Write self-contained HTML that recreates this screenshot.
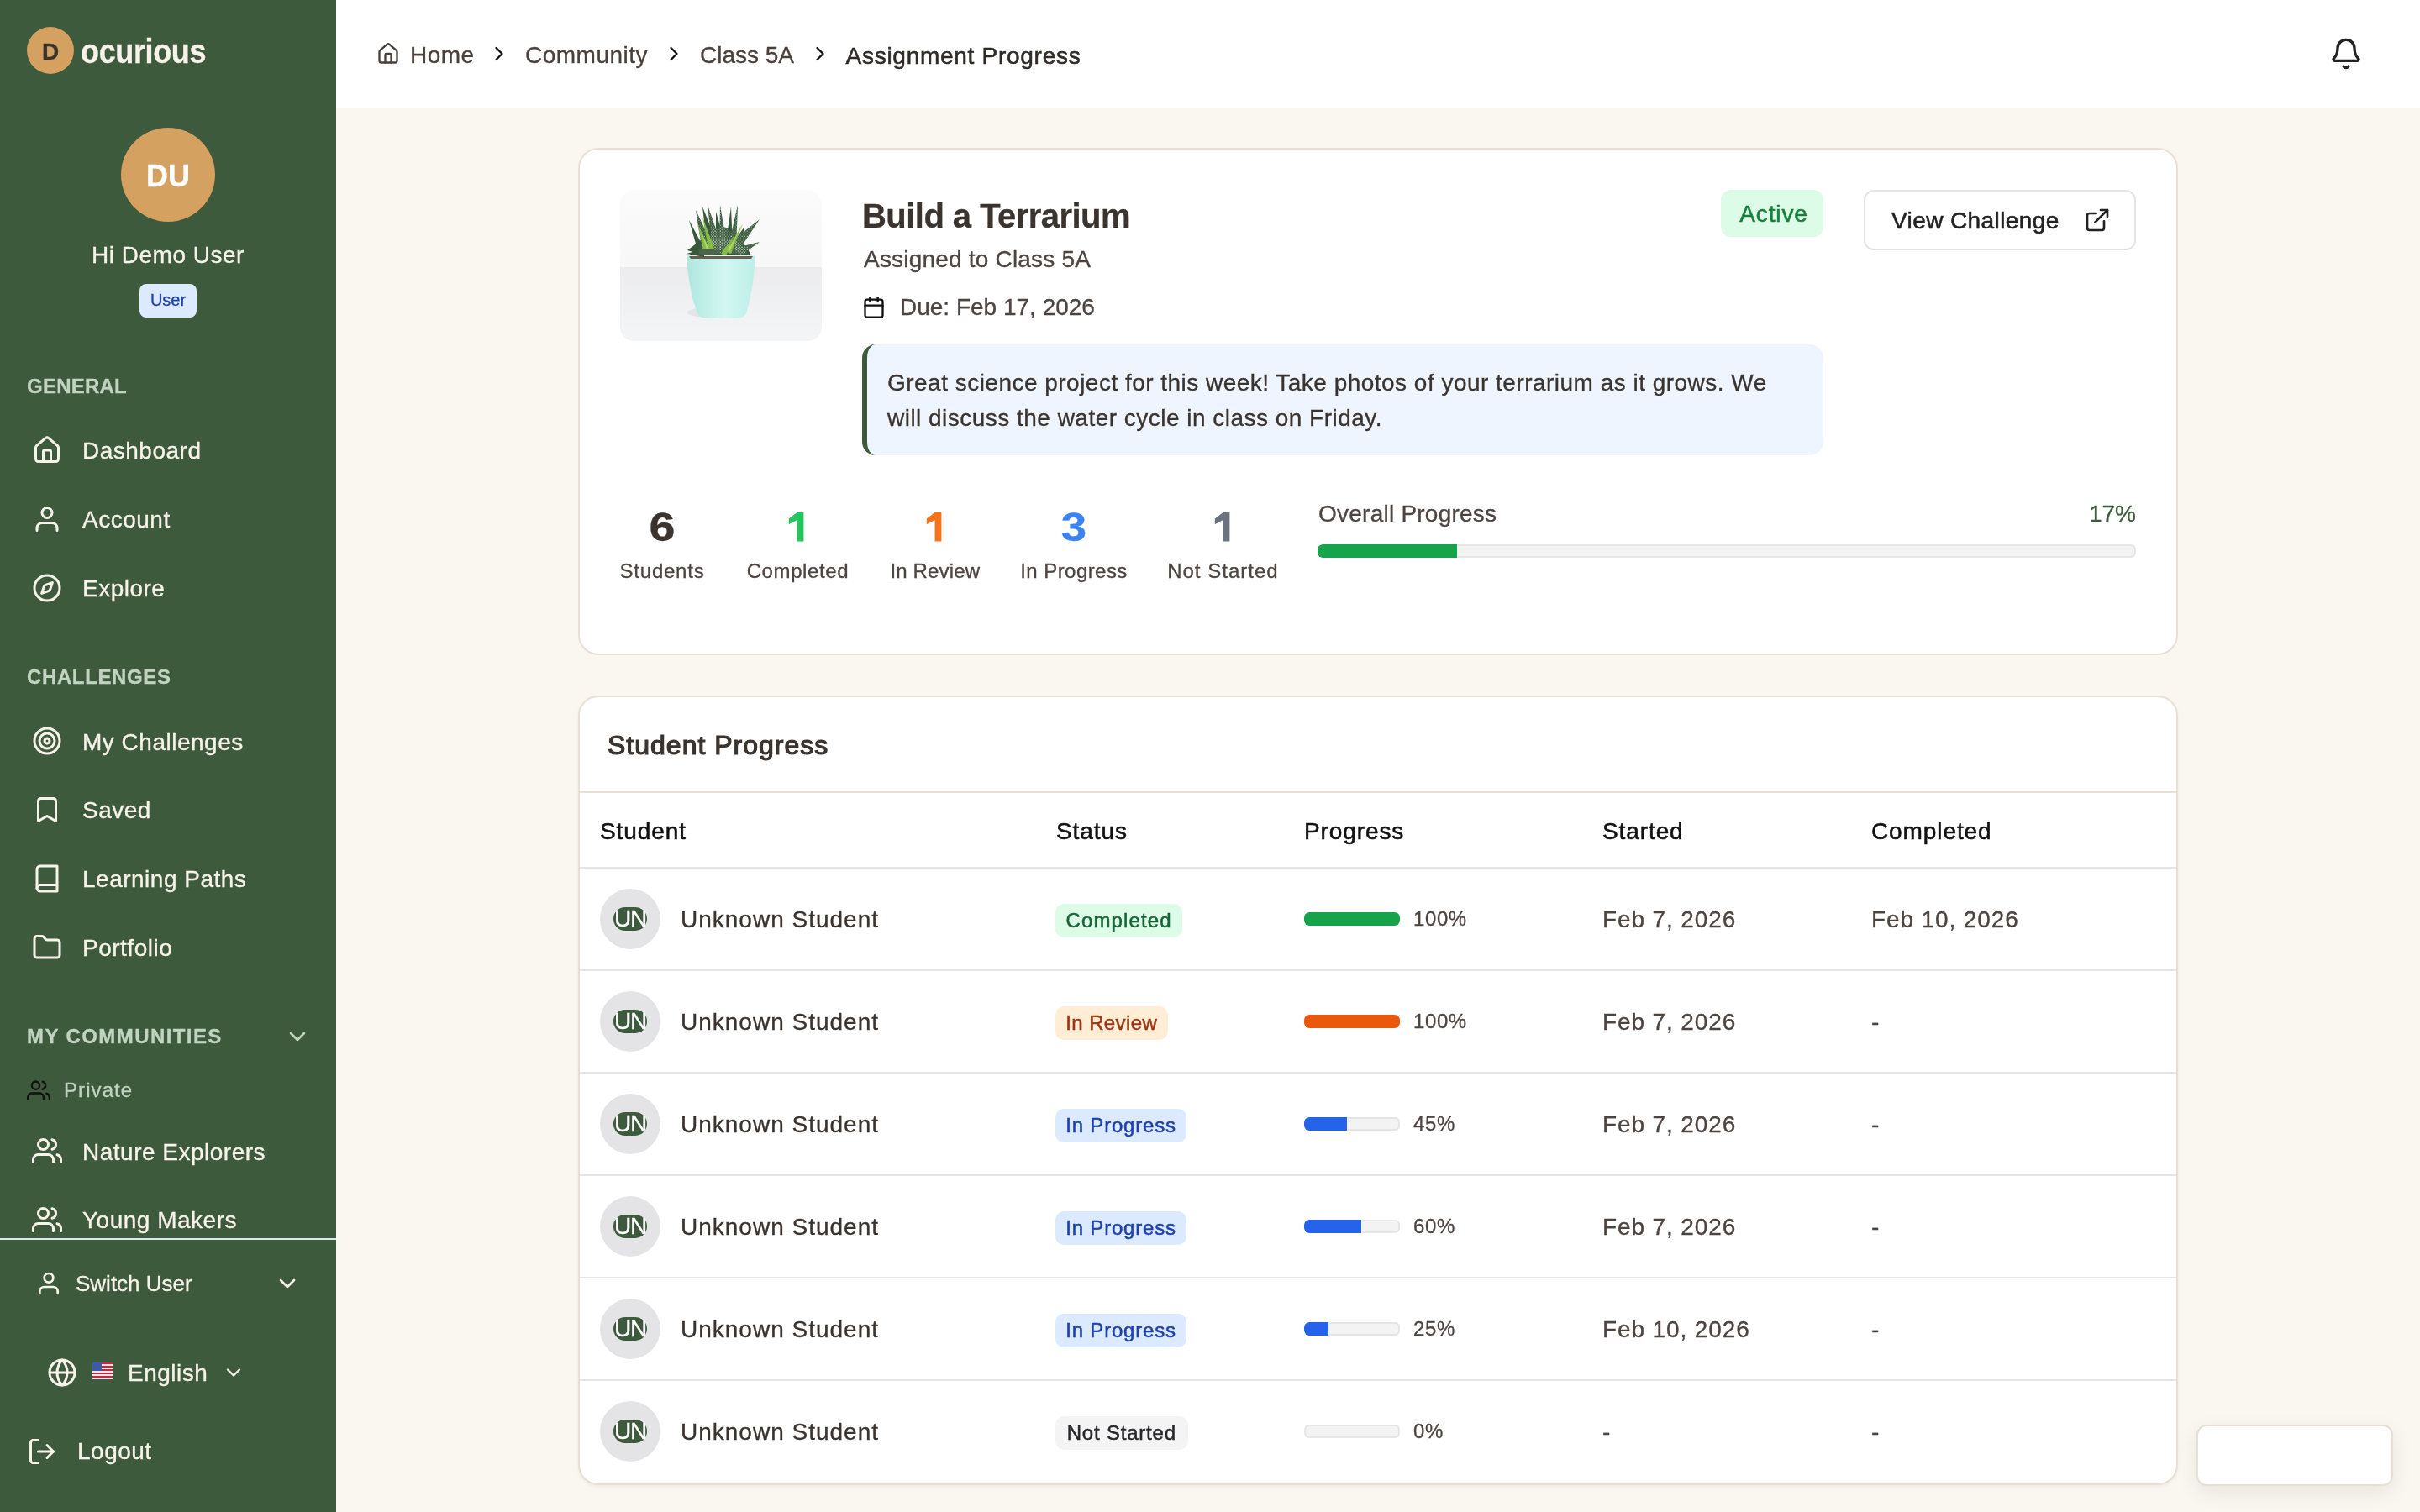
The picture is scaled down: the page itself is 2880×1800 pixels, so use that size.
<!DOCTYPE html>
<html><head><meta charset="utf-8">
<style>
html,body{margin:0;padding:0;overflow:hidden;background:#faf6f0;}
#r{-webkit-text-stroke:0.15px currentColor;will-change:transform;zoom:2;width:1440px;height:900px;position:relative;overflow:hidden;font-family:"Liberation Sans",sans-serif;background:#faf6f0;}
@media (max-width:2000px){#r{zoom:1;}}
.a{position:absolute;}
.t{position:absolute;line-height:1;white-space:nowrap;}
svg.i{position:absolute;fill:none;stroke:currentColor;stroke-width:2;stroke-linecap:round;stroke-linejoin:round;}
#sb{position:absolute;left:0;top:0;width:200px;height:900px;background:#3d5a3d;color:#f8f3ea;}
#sb .n{font-size:14px;color:#f8f3ea;letter-spacing:0.25px;margin-top:0.5px;}
#sb .h{font-size:12px;font-weight:bold;color:#c2d3c2;letter-spacing:0.45px;}
#hd{position:absolute;left:200px;top:0;width:1240px;height:64px;background:#fff;}
.bc{font-size:14px;color:#4a403b;letter-spacing:0.25px;}
.card{position:absolute;background:#fff;border:1px solid #e7e0d4;border-radius:12px;box-sizing:border-box;}
.dk{color:#3a332e;}
.md{color:#4d4440;}
.badge{position:absolute;height:20px;border-radius:5px;}
.bt{font-size:12px;-webkit-text-stroke:0.25px currentColor;}
.trk{position:absolute;height:8px;border-radius:3px;background:#f3f3f3;box-shadow:inset 0 0 0 1px #e6e6e6;overflow:hidden;}
.fill{position:absolute;left:0;top:0;height:8px;border-radius:3px 0 0 3px;}
.line{position:absolute;height:1px;background:#e5e5e5;}
</style></head>
<body><div id="r">

<!-- SIDEBAR -->
<div id="sb">
  <div class="a" style="left:16px;top:16px;width:28px;height:28px;border-radius:50%;background:#d4a161;"></div>
  <div class="t" style="left:16px;width:28px;text-align:center;top:24.2px;font-size:14px;font-weight:bold;color:#3a332e;">D</div>
  <div class="t" style="left:48px;top:20.3px;font-size:20px;font-weight:bold;color:#f8f3ea;letter-spacing:-0.2px;transform:scaleX(0.9);transform-origin:0 0;">ocurious</div>

  <div class="a" style="left:72px;top:76px;width:56px;height:56px;border-radius:50%;background:#d4a161;"></div>
  <div class="t" style="left:72px;width:56px;text-align:center;top:95.8px;font-size:18px;font-weight:bold;color:#fff;">DU</div>
  <div class="t n" style="left:0;width:200px;text-align:center;top:144.4px;">Hi Demo User</div>
  <div class="a" style="left:83px;top:169px;width:34px;height:20px;border-radius:4px;background:#dbeafe;"></div>
  <div class="t" style="left:83px;width:34px;text-align:center;top:173.5px;font-size:10px;color:#1e40af;">User</div>

  <div class="t h" style="left:16px;top:223.8px;letter-spacing:0.12px;">GENERAL</div>
  <!-- house -->
  <svg class="i" style="left:19px;top:259px;width:18px;height:18px" viewBox="0 0 24 24"><path d="M15 21v-8a1 1 0 0 0-1-1h-4a1 1 0 0 0-1 1v8"/><path d="M3 10a2 2 0 0 1 .709-1.528l7-5.999a2 2 0 0 1 2.582 0l7 5.999A2 2 0 0 1 21 10v9a2 2 0 0 1-2 2H5a2 2 0 0 1-2-2z"/></svg>
  <div class="t n" style="left:49px;top:261.15px;">Dashboard</div>
  <svg class="i" style="left:19px;top:300px;width:18px;height:18px" viewBox="0 0 24 24"><path d="M20 21v-2a4 4 0 0 0-4-4H8a4 4 0 0 0-4 4v2"/><circle cx="12" cy="7" r="4"/></svg>
  <div class="t n" style="left:49px;top:302.15px;">Account</div>
  <svg class="i" style="left:19px;top:341px;width:18px;height:18px" viewBox="0 0 24 24"><path d="m16.24 7.76-1.804 5.411a2 2 0 0 1-1.265 1.265L7.76 16.24l1.804-5.411a2 2 0 0 1 1.265-1.265z"/><circle cx="12" cy="12" r="10"/></svg>
  <div class="t n" style="left:49px;top:343.15px;">Explore</div>

  <div class="t h" style="left:16px;top:397.2px;letter-spacing:0.31px;">CHALLENGES</div>
  <svg class="i" style="left:19px;top:432px;width:18px;height:18px" viewBox="0 0 24 24"><circle cx="12" cy="12" r="10"/><circle cx="12" cy="12" r="6"/><circle cx="12" cy="12" r="2"/></svg>
  <div class="t n" style="left:49px;top:434.25px;">My Challenges</div>
  <svg class="i" style="left:19px;top:473px;width:18px;height:18px" viewBox="0 0 24 24"><path d="m19 21-7-4-7 4V5a2 2 0 0 1 2-2h10a2 2 0 0 1 2 2v16z"/></svg>
  <div class="t n" style="left:49px;top:475.15px;">Saved</div>
  <svg class="i" style="left:19px;top:514px;width:18px;height:18px" viewBox="0 0 24 24"><path d="M4 19.5A2.5 2.5 0 0 1 6.5 17H20"/><path d="M6.5 2H20v20H6.5A2.5 2.5 0 0 1 4 19.5v-15A2.5 2.5 0 0 1 6.5 2z"/></svg>
  <div class="t n" style="left:49px;top:515.9px;">Learning Paths</div>
  <svg class="i" style="left:19px;top:555px;width:18px;height:18px" viewBox="0 0 24 24"><path d="M20 20a2 2 0 0 0 2-2V8a2 2 0 0 0-2-2h-7.9a2 2 0 0 1-1.69-.9L9.6 3.9A2 2 0 0 0 7.93 3H4a2 2 0 0 0-2 2v13a2 2 0 0 0 2 2Z"/></svg>
  <div class="t n" style="left:49px;top:556.9px;">Portfolio</div>

  <div class="t h" style="left:16px;top:610.9px;letter-spacing:0.71px;">MY COMMUNITIES</div>
  <svg class="i" style="left:169px;top:609px;width:16px;height:16px;color:#c2d3c2" viewBox="0 0 24 24"><path d="m6 9 6 6 6-6"/></svg>
  <svg class="i" style="left:16px;top:642px;width:14px;height:14px;color:#111" viewBox="0 0 24 24"><path d="M17 21v-2a4 4 0 0 0-4-4H5a4 4 0 0 0-4 4v2"/><circle cx="9" cy="7" r="4"/><path d="M23 21v-2a4 4 0 0 0-3-3.87"/><path d="M16 3.13a4 4 0 0 1 0 7.75"/></svg>
  <div class="t" style="left:38px;top:643.1px;font-size:12px;color:#c2d3c2;letter-spacing:0.54px;">Private</div>
  <svg class="i" style="left:19px;top:676px;width:18px;height:18px" viewBox="0 0 24 24"><path d="M17 21v-2a4 4 0 0 0-4-4H5a4 4 0 0 0-4 4v2"/><circle cx="9" cy="7" r="4"/><path d="M23 21v-2a4 4 0 0 0-3-3.87"/><path d="M16 3.13a4 4 0 0 1 0 7.75"/></svg>
  <div class="t n" style="left:49px;top:678.25px;">Nature Explorers</div>
  <svg class="i" style="left:19px;top:717px;width:18px;height:18px" viewBox="0 0 24 24"><path d="M17 21v-2a4 4 0 0 0-4-4H5a4 4 0 0 0-4 4v2"/><circle cx="9" cy="7" r="4"/><path d="M23 21v-2a4 4 0 0 0-3-3.87"/><path d="M16 3.13a4 4 0 0 1 0 7.75"/></svg>
  <div class="t n" style="left:49px;top:718.9px;">Young Makers</div>

  <div class="a" style="left:0;top:737px;width:200px;height:1px;background:#dfe4ea;"></div>
  <svg class="i" style="left:21px;top:756px;width:16px;height:16px" viewBox="0 0 24 24"><path d="M20 21v-2a4 4 0 0 0-4-4H8a4 4 0 0 0-4 4v2"/><circle cx="12" cy="7" r="4"/></svg>
  <div class="t" style="left:45px;top:757.25px;font-size:13px;color:#f8f3ea;">Switch User</div>
  <svg class="i" style="left:163px;top:756px;width:16px;height:16px" viewBox="0 0 24 24"><path d="m6 9 6 6 6-6"/></svg>

  <svg class="i" style="left:28px;top:808px;width:18px;height:18px" viewBox="0 0 24 24"><circle cx="12" cy="12" r="10"/><path d="M12 2a14.5 14.5 0 0 0 0 20 14.5 14.5 0 0 0 0-20"/><path d="M2 12h20"/></svg>
  <svg class="a" style="left:55px;top:811px;width:12px;height:10px" viewBox="0 0 12 10"><rect width="12" height="10" fill="#e8e8f0"/><g fill="#c8283c"><rect y="0" width="12" height="1"/><rect y="2" width="12" height="1"/><rect y="4" width="12" height="1"/><rect y="6" width="12" height="1"/><rect y="8" width="12" height="1.2"/></g><rect width="5.5" height="5" fill="#3c5aa8"/></svg>
  <div class="t n" style="left:76px;top:810.05px;">English</div>
  <svg class="i" style="left:132px;top:810px;width:14px;height:14px" viewBox="0 0 24 24"><path d="m6 9 6 6 6-6"/></svg>

  <svg class="i" style="left:16px;top:855px;width:18px;height:18px" viewBox="0 0 24 24"><path d="M9 21H5a2 2 0 0 1-2-2V5a2 2 0 0 1 2-2h4"/><polyline points="16 17 21 12 16 7"/><line x1="21" x2="9" y1="12" y2="12"/></svg>
  <div class="t n" style="left:46px;top:856.5px;">Logout</div>
</div>

<!-- HEADER -->
<div class="a" style="left:200px;top:0;width:1240px;height:64px;background:#fff;"></div>
<svg class="i" style="left:224px;top:25px;width:14px;height:14px;color:#4a403b" viewBox="0 0 24 24"><path d="M15 21v-8a1 1 0 0 0-1-1h-4a1 1 0 0 0-1 1v8"/><path d="M3 10a2 2 0 0 1 .709-1.528l7-5.999a2 2 0 0 1 2.582 0l7 5.999A2 2 0 0 1 21 10v9a2 2 0 0 1-2 2H5a2 2 0 0 1-2-2z"/></svg>
<div class="t bc" style="left:244px;top:26.1px;">Home</div>
<svg class="i" style="left:290px;top:25px;width:14px;height:14px;color:#111" viewBox="0 0 24 24"><path d="m9 18 6-6-6-6"/></svg>
<div class="t bc" style="left:312.5px;top:26.1px;">Community</div>
<svg class="i" style="left:394px;top:25px;width:14px;height:14px;color:#111" viewBox="0 0 24 24"><path d="m9 18 6-6-6-6"/></svg>
<div class="t bc" style="left:416.5px;top:26.1px;letter-spacing:0;">Class 5A</div>
<svg class="i" style="left:481px;top:25px;width:14px;height:14px;color:#111" viewBox="0 0 24 24"><path d="m9 18 6-6-6-6"/></svg>
<div class="t bc" style="left:503.3px;top:26.3px;color:#2f2a26;letter-spacing:0.36px;-webkit-text-stroke:0.28px #2f2a26;">Assignment Progress</div>
<svg class="i" style="left:1386px;top:22px;width:20px;height:20px;color:#222" viewBox="0 0 24 24"><path d="M10.268 21a2 2 0 0 0 3.464 0"/><path d="M3.262 15.326A1 1 0 0 0 4 17h16a1 1 0 0 0 .74-1.673C19.41 13.956 18 12.499 18 8A6 6 0 0 0 6 8c0 4.499-1.411 5.956-2.738 7.326"/></svg>

<!-- CARD 1 -->
<div class="card" style="left:344px;top:88px;width:952px;height:302px;"></div>
<svg class="a" style="left:369px;top:113px;width:120px;height:90px;border-radius:8px;" viewBox="0 0 120 90">
  <defs>
    <linearGradient id="bgt" x1="0" y1="0" x2="0" y2="1"><stop offset="0" stop-color="#fbfbfb"/><stop offset="1" stop-color="#f7f7f7"/></linearGradient>
    <linearGradient id="bgb" x1="0" y1="0" x2="0" y2="1"><stop offset="0" stop-color="#ececef"/><stop offset="1" stop-color="#f4f5f6"/></linearGradient>
    <linearGradient id="pot" x1="0" y1="0" x2="1" y2="0"><stop offset="0" stop-color="#aee6de"/><stop offset="0.55" stop-color="#d3f7f2"/><stop offset="1" stop-color="#bdeee8"/></linearGradient>
    <pattern id="spk" width="1.6" height="1.6" patternUnits="userSpaceOnUse"><circle cx="0.5" cy="0.5" r="0.32" fill="#e8eee6"/><circle cx="1.3" cy="1.2" r="0.25" fill="#dfe8dc"/></pattern>
    <clipPath id="cp"><rect width="120" height="90" rx="8"/></clipPath>
  </defs>
  <g clip-path="url(#cp)">
  <rect width="120" height="46" fill="url(#bgt)"/>
  <rect y="46" width="120" height="44" fill="url(#bgb)"/>
  <ellipse cx="53" cy="73" rx="13" ry="3" fill="#e0e0e3" opacity="0.7"/>
  <path d="M39.6 39.2 L80.4 39.2 Q79.5 58 75.5 72 Q74.8 76.3 70 76.3 L51 76.3 Q46.4 76.3 45.4 72 Q40.5 58 39.6 39.2 Z" fill="url(#pot)"/>
  <path d="M41 39.5 L79 39.5 L78 41 L42 41 Z" fill="#6a5f4e"/>
  <g fill="#37583a">
    <path d="M41 18 L49 33 L47 39 Z"/>
    <path d="M45 12 L54 31 L49 37 Z"/>
    <path d="M49 10 L57 30 L52 36 Z"/>
    <path d="M52 9 L59 29 L55 36 Z"/>
    <path d="M57 13 L62 30 L57 35 Z"/>
    <path d="M59.5 9 L63 30 L59 36 Z"/>
    <path d="M66 10 L63 31 L67 35 Z"/>
    <path d="M70 9 L65 31 L69 36 Z"/>
    <path d="M83 17.5 L66 31 L70 37 Z"/>
    <path d="M83 31 L67 35 L72 39 Z"/>
    <path d="M74 22 L66 33 L71 36 Z"/>
    <path d="M39.6 38 L50 35 L50 40 Z"/>
    <path d="M45 28 L52 36 L48 39 Z"/>
    <ellipse cx="60" cy="30" rx="9" ry="8"/>
    <path d="M44 39 Q47 30 52 27 L68 27 Q74 31 78 39 Z"/>
    <path d="M40 36 L48 30 L50 39 Z"/>
  </g>
  <g fill="url(#spk)" opacity="0.85">
    <path d="M45 12 L54 31 L49 37 Z"/>
    <path d="M52 9 L59 29 L55 36 Z"/>
    <path d="M59.5 9 L63 30 L59 36 Z"/>
    <path d="M70 9 L65 31 L69 36 Z"/>
    <path d="M83 17.5 L66 31 L70 37 Z"/>
    <ellipse cx="60" cy="29" rx="7" ry="7"/>
    <path d="M47 38 Q50 31 54 29 L67 29 Q72 32 76 38 Z"/>
    <path d="M83 31 L67 35 L72 39 Z"/>
  </g>
  <g fill="#86bd44">
    <path d="M46 20 L54 37 L50 38 Z"/>
    <path d="M49 16 L56 35 L53 37 Z"/>
    <path d="M73 20 L63 37 L66 38 Z"/>
    <path d="M68 27 L60 38 L63 39 Z"/>
  </g>
  <g fill="#c9e07a" opacity="0.7">
    <path d="M48 24 L53 36 L52 37 Z"/>
    <path d="M71 24 L64 36 L65 37 Z"/>
  </g>
  <ellipse cx="52" cy="37" rx="5.5" ry="2" fill="#4a654a"/>
  </g>
</svg>
<div class="t dk" style="left:513px;top:118.3px;font-size:20px;font-weight:bold;letter-spacing:-0.27px;">Build a Terrarium</div>
<div class="t md" style="left:514px;top:147.6px;font-size:14px;letter-spacing:0.1px;">Assigned to Class 5A</div>
<svg class="i" style="left:513px;top:176px;width:14px;height:14px;color:#111" viewBox="0 0 24 24"><path d="M8 2v4"/><path d="M16 2v4"/><rect width="18" height="18" x="3" y="4" rx="2"/><path d="M3 10h18"/></svg>
<div class="t md" style="left:535.5px;top:175.9px;font-size:14px;letter-spacing:0px;">Due: Feb 17, 2026</div>
<div class="a" style="left:513px;top:205px;width:572px;height:66px;box-sizing:border-box;background:#eff5ff;border-left:3px solid #3d5a3d;border-radius:8px;"></div>
<div class="t dk" style="left:528px;top:220.9px;font-size:14px;letter-spacing:0.24px;">Great science project for this week! Take photos of your terrarium as it grows. We</div>
<div class="t dk" style="left:528px;top:241.9px;font-size:14px;letter-spacing:0.24px;">will discuss the water cycle in class on Friday.</div>

<div class="a" style="left:1024px;top:113px;width:61px;height:28px;border-radius:6px;background:#dcfce7;"></div>
<div class="t" style="left:1025px;width:61px;text-align:center;top:120.45px;font-size:14px;color:#15803d;letter-spacing:0.45px;-webkit-text-stroke:0.28px currentColor;">Active</div>
<div class="a" style="left:1109px;top:113px;width:162px;height:36px;box-sizing:border-box;border:1px solid #e4e4e7;border-radius:6px;background:#fff;"></div>
<div class="t" style="left:1125.5px;top:124.65px;font-size:14px;color:#222;letter-spacing:0.2px;-webkit-text-stroke:0.28px #222;">View Challenge</div>
<svg class="i" style="left:1240px;top:123px;width:16px;height:16px;color:#222" viewBox="0 0 24 24"><path d="M15 3h6v6"/><path d="M10 14 21 3"/><path d="M18 13v6a2 2 0 0 1-2 2H5a2 2 0 0 1-2-2V8a2 2 0 0 1 2-2h6"/></svg>

<!-- stats -->
<div class="t" style="left:344px;width:100px;text-align:center;top:301.9px;font-size:24px;font-weight:bold;color:#3a332e;transform:scaleX(1.16);">6</div>
<div class="t md" style="left:344px;width:100px;text-align:center;top:333.8px;font-size:12px;letter-spacing:0.38px;">Students</div>
<svg class="a" style="left:469.0px;top:304.5px;width:10px;height:18px;" viewBox="0 0 20 36"><path d="M10.6 1 H18.4 V35.4 H10.6 V10 L0.8 15.2 V8.6 Z" fill="#22c55e"/></svg>
<div class="t md" style="left:424.7px;width:100px;text-align:center;top:333.8px;font-size:12px;letter-spacing:0.3px;">Completed</div>
<svg class="a" style="left:551.0px;top:304.5px;width:10px;height:18px;" viewBox="0 0 20 36"><path d="M10.6 1 H18.4 V35.4 H10.6 V10 L0.8 15.2 V8.6 Z" fill="#f97316"/></svg>
<div class="t md" style="left:506.4px;width:100px;text-align:center;top:333.8px;font-size:12px;letter-spacing:0.08px;">In Review</div>
<div class="t" style="left:589px;width:100px;text-align:center;top:301.9px;font-size:24px;font-weight:bold;color:#3b82f6;transform:scaleX(1.14);">3</div>
<div class="t md" style="left:589px;width:100px;text-align:center;top:333.8px;font-size:12px;letter-spacing:0.22px;">In Progress</div>
<svg class="a" style="left:722.25px;top:304.5px;width:10px;height:18px;" viewBox="0 0 20 36"><path d="M10.6 1 H18.4 V35.4 H10.6 V10 L0.8 15.2 V8.6 Z" fill="#6b7280"/></svg>
<div class="t md" style="left:677.7px;width:100px;text-align:center;top:333.8px;font-size:12px;letter-spacing:0.5px;">Not Started</div>

<div class="t md" style="left:784.5px;top:299.15px;font-size:14px;letter-spacing:0.12px;">Overall Progress</div>
<div class="t" style="left:1171px;width:100px;text-align:right;top:299.15px;font-size:14px;color:#3d5a3d;">17%</div>
<div class="trk" style="left:784px;top:324px;width:487px;"><div class="fill" style="width:83px;background:#16a34a;"></div></div>

<!-- CARD 2 -->
<div class="card" style="left:344px;top:414px;width:952px;height:470px;box-shadow:0 1px 2px rgba(0,0,0,0.05);"></div>
<div class="t dk" style="left:361.5px;top:435.5px;font-size:16px;letter-spacing:0.5px;-webkit-text-stroke:0.6px currentColor;">Student Progress</div>
<div class="a" style="left:345px;top:471px;width:950px;height:1px;background:#e7e0d4;"></div>
<div class="t" style="left:357px;top:488.1px;font-size:14px;color:#111;letter-spacing:0.45px;-webkit-text-stroke:0.28px #111;">Student</div>
<div class="t" style="left:628.5px;top:488.1px;font-size:14px;color:#111;letter-spacing:0.45px;-webkit-text-stroke:0.28px #111;">Status</div>
<div class="t" style="left:776px;top:488.1px;font-size:14px;color:#111;letter-spacing:0.45px;-webkit-text-stroke:0.28px #111;">Progress</div>
<div class="t" style="left:953.5px;top:488.1px;font-size:14px;color:#111;letter-spacing:0.45px;-webkit-text-stroke:0.28px #111;">Started</div>
<div class="t" style="left:1113.5px;top:488.1px;font-size:14px;color:#111;letter-spacing:0.45px;-webkit-text-stroke:0.28px #111;">Completed</div>
<div class="line" style="left:345px;top:516px;width:950px;"></div>

<div id="rows"></div>
<!-- row 1 -->
<div class="a" style="left:357px;top:529px;width:36px;height:36px;border-radius:50%;background:#e4e4e7;"></div>
<div class="a" style="left:365px;top:540px;width:20px;height:14px;border-radius:7px;background:#3d5a3d;"></div>
<div class="t" style="left:355px;width:40px;text-align:center;top:540.15px;font-size:14px;color:#fff;letter-spacing:-0.6px;">UN</div>
<div class="t dk" style="left:405px;top:540.4px;font-size:14px;letter-spacing:0.5px;">Unknown Student</div>
<div class="badge" style="left:628px;top:538px;width:75.6px;background:#dcfce7;"></div>
<div class="t bt" style="left:628px;width:75.6px;text-align:center;top:542.1px;color:#166534;letter-spacing:0.56px;">Completed</div>
<div class="trk" style="left:776px;top:543px;width:57px;"><div class="fill" style="width:57px;border-radius:3px;background:#16a34a;"></div></div>
<div class="t md" style="left:841px;top:540.84px;font-size:12px;letter-spacing:0.3px;">100%</div>
<div class="t md" style="left:953.5px;top:540.25px;font-size:14px;letter-spacing:0.44px;">Feb 7, 2026</div>
<div class="t md" style="left:1113.5px;top:540.25px;font-size:14px;letter-spacing:0.44px;">Feb 10, 2026</div>
<div class="line" style="left:345px;top:577px;width:950px;"></div>
<!-- row 2 -->
<div class="a" style="left:357px;top:590px;width:36px;height:36px;border-radius:50%;background:#e4e4e7;"></div>
<div class="a" style="left:365px;top:601px;width:20px;height:14px;border-radius:7px;background:#3d5a3d;"></div>
<div class="t" style="left:355px;width:40px;text-align:center;top:601.15px;font-size:14px;color:#fff;letter-spacing:-0.6px;">UN</div>
<div class="t dk" style="left:405px;top:601.4px;font-size:14px;letter-spacing:0.5px;">Unknown Student</div>
<div class="badge" style="left:628px;top:599px;width:66.75px;background:#ffedd5;"></div>
<div class="t bt" style="left:628px;width:66.75px;text-align:center;top:603.1px;color:#9a3412;letter-spacing:0.2px;">In Review</div>
<div class="trk" style="left:776px;top:604px;width:57px;"><div class="fill" style="width:57px;border-radius:3px;background:#ea580c;"></div></div>
<div class="t md" style="left:841px;top:601.84px;font-size:12px;letter-spacing:0.3px;">100%</div>
<div class="t md" style="left:953.5px;top:601.25px;font-size:14px;letter-spacing:0.44px;">Feb 7, 2026</div>
<div class="t md" style="left:1113.5px;top:601.25px;font-size:14px;letter-spacing:0.44px;">-</div>
<div class="line" style="left:345px;top:638px;width:950px;"></div>
<!-- row 3 -->
<div class="a" style="left:357px;top:651px;width:36px;height:36px;border-radius:50%;background:#e4e4e7;"></div>
<div class="a" style="left:365px;top:662px;width:20px;height:14px;border-radius:7px;background:#3d5a3d;"></div>
<div class="t" style="left:355px;width:40px;text-align:center;top:662.15px;font-size:14px;color:#fff;letter-spacing:-0.6px;">UN</div>
<div class="t dk" style="left:405px;top:662.4px;font-size:14px;letter-spacing:0.5px;">Unknown Student</div>
<div class="badge" style="left:628px;top:660px;width:78px;background:#dbeafe;"></div>
<div class="t bt" style="left:628px;width:78px;text-align:center;top:664.1px;color:#1e40af;letter-spacing:0.4px;">In Progress</div>
<div class="trk" style="left:776px;top:665px;width:57px;"><div class="fill" style="width:25.65px;background:#2563eb;"></div></div>
<div class="t md" style="left:841px;top:662.84px;font-size:12px;letter-spacing:0.3px;">45%</div>
<div class="t md" style="left:953.5px;top:662.25px;font-size:14px;letter-spacing:0.44px;">Feb 7, 2026</div>
<div class="t md" style="left:1113.5px;top:662.25px;font-size:14px;letter-spacing:0.44px;">-</div>
<div class="line" style="left:345px;top:699px;width:950px;"></div>
<!-- row 4 -->
<div class="a" style="left:357px;top:712px;width:36px;height:36px;border-radius:50%;background:#e4e4e7;"></div>
<div class="a" style="left:365px;top:723px;width:20px;height:14px;border-radius:7px;background:#3d5a3d;"></div>
<div class="t" style="left:355px;width:40px;text-align:center;top:723.15px;font-size:14px;color:#fff;letter-spacing:-0.6px;">UN</div>
<div class="t dk" style="left:405px;top:723.4px;font-size:14px;letter-spacing:0.5px;">Unknown Student</div>
<div class="badge" style="left:628px;top:721px;width:78px;background:#dbeafe;"></div>
<div class="t bt" style="left:628px;width:78px;text-align:center;top:725.1px;color:#1e40af;letter-spacing:0.4px;">In Progress</div>
<div class="trk" style="left:776px;top:726px;width:57px;"><div class="fill" style="width:34.2px;background:#2563eb;"></div></div>
<div class="t md" style="left:841px;top:723.84px;font-size:12px;letter-spacing:0.3px;">60%</div>
<div class="t md" style="left:953.5px;top:723.25px;font-size:14px;letter-spacing:0.44px;">Feb 7, 2026</div>
<div class="t md" style="left:1113.5px;top:723.25px;font-size:14px;letter-spacing:0.44px;">-</div>
<div class="line" style="left:345px;top:760px;width:950px;"></div>
<!-- row 5 -->
<div class="a" style="left:357px;top:773px;width:36px;height:36px;border-radius:50%;background:#e4e4e7;"></div>
<div class="a" style="left:365px;top:784px;width:20px;height:14px;border-radius:7px;background:#3d5a3d;"></div>
<div class="t" style="left:355px;width:40px;text-align:center;top:784.15px;font-size:14px;color:#fff;letter-spacing:-0.6px;">UN</div>
<div class="t dk" style="left:405px;top:784.4px;font-size:14px;letter-spacing:0.5px;">Unknown Student</div>
<div class="badge" style="left:628px;top:782px;width:78px;background:#dbeafe;"></div>
<div class="t bt" style="left:628px;width:78px;text-align:center;top:786.1px;color:#1e40af;letter-spacing:0.4px;">In Progress</div>
<div class="trk" style="left:776px;top:787px;width:57px;"><div class="fill" style="width:14.25px;background:#2563eb;"></div></div>
<div class="t md" style="left:841px;top:784.84px;font-size:12px;letter-spacing:0.3px;">25%</div>
<div class="t md" style="left:953.5px;top:784.25px;font-size:14px;letter-spacing:0.44px;">Feb 10, 2026</div>
<div class="t md" style="left:1113.5px;top:784.25px;font-size:14px;letter-spacing:0.44px;">-</div>
<div class="line" style="left:345px;top:821px;width:950px;"></div>
<!-- row 6 -->
<div class="a" style="left:357px;top:834px;width:36px;height:36px;border-radius:50%;background:#e4e4e7;"></div>
<div class="a" style="left:365px;top:845px;width:20px;height:14px;border-radius:7px;background:#3d5a3d;"></div>
<div class="t" style="left:355px;width:40px;text-align:center;top:845.15px;font-size:14px;color:#fff;letter-spacing:-0.6px;">UN</div>
<div class="t dk" style="left:405px;top:845.4px;font-size:14px;letter-spacing:0.5px;">Unknown Student</div>
<div class="badge" style="left:628px;top:843px;width:78.8px;background:#f4f4f5;"></div>
<div class="t bt" style="left:628px;width:78.8px;text-align:center;top:847.1px;color:#27272a;letter-spacing:0.4px;">Not Started</div>
<div class="trk" style="left:776px;top:848px;width:57px;"></div>
<div class="t md" style="left:841px;top:845.84px;font-size:12px;letter-spacing:0.3px;">0%</div>
<div class="t md" style="left:953.5px;top:845.25px;font-size:14px;letter-spacing:0.44px;">-</div>
<div class="t md" style="left:1113.5px;top:845.25px;font-size:14px;letter-spacing:0.44px;">-</div>

<!-- toast placeholder -->
<div class="a" style="left:1307px;top:848px;width:117px;height:36.5px;box-sizing:border-box;background:#fff;border:1px solid #e7e0d4;border-radius:6px;box-shadow:0 4px 12px rgba(0,0,0,0.08);"></div>

</div></body></html>
